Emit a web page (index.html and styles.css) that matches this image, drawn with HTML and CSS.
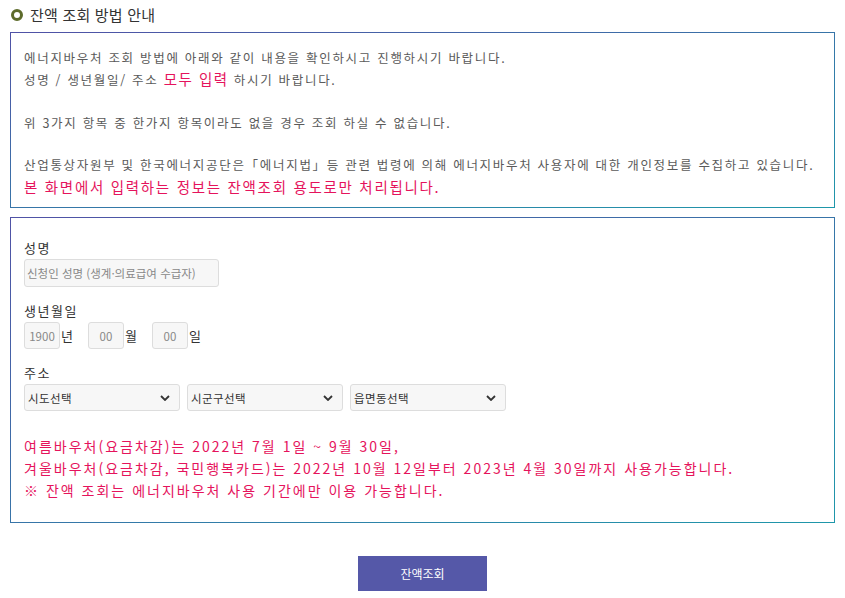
FILE: index.html
```html
<!DOCTYPE html>
<html lang="ko">
<head>
<meta charset="utf-8">
<link rel="stylesheet" href="styles.css">
</head>
<body>
<div class="page">
  <h2 class="title"><span class="dot"></span>잔액 조회 방법 안내</h2>
  <div class="box info">
    <p>에너지바우처 조회 방법에 아래와 같이 내용을 확인하시고 진행하시기 바랍니다.</p>
    <p>성명 / 생년월일/ 주소 <span class="red big">모두 입력</span> 하시기 바랍니다.</p>
    <p class="blank">&nbsp;</p>
    <p>위 3가지 항목 중 한가지 항목이라도 없을 경우 조회 하실 수 없습니다.</p>
    <p class="blank">&nbsp;</p>
    <p>산업통상자원부 및 한국에너지공단은「에너지법」등 관련 법령에 의해 에너지바우처 사용자에 대한 개인정보를 수집하고 있습니다.</p>
    <p class="red big">본 화면에서 입력하는 정보는 잔액조회 용도로만 처리됩니다.</p>
  </div>
  <div class="box form">
    <div class="field">
      <div class="label">성명</div>
      <input class="inp name" type="text" placeholder="신청인 성명 (생계·의료급여 수급자)">
    </div>
    <div class="field">
      <div class="label">생년월일</div>
      <div class="row">
        <input class="inp small" type="text" placeholder="1900"><span class="unit">년</span>
        <input class="inp small" type="text" placeholder="00"><span class="unit">월</span>
        <input class="inp small" type="text" placeholder="00"><span class="unit">일</span>
      </div>
    </div>
    <div class="field">
      <div class="label">주소</div>
      <div class="row selects">
        <div class="sel"><span>시도선택</span><svg viewBox="0 0 10 6" width="10" height="6"><path d="M1 1 L5 5 L9 1" fill="none" stroke="#333" stroke-width="1.8"/></svg></div>
        <div class="sel"><span>시군구선택</span><svg viewBox="0 0 10 6" width="10" height="6"><path d="M1 1 L5 5 L9 1" fill="none" stroke="#333" stroke-width="1.8"/></svg></div>
        <div class="sel"><span>읍면동선택</span><svg viewBox="0 0 10 6" width="10" height="6"><path d="M1 1 L5 5 L9 1" fill="none" stroke="#333" stroke-width="1.8"/></svg></div>
      </div>
    </div>
    <div class="notice">
      <p>여름바우처(요금차감)는 2022년 7월 1일 ~ 9월 30일,</p>
      <p>겨울바우처(요금차감, 국민행복카드)는 2022년 10월 12일부터 2023년 4월 30일까지 사용가능합니다.</p>
      <p>※ 잔액 조회는 에너지바우처 사용 기간에만 이용 가능합니다.</p>
    </div>
  </div>
  <div class="actions">
    <button class="btn" type="button">잔액조회</button>
  </div>
</div>
</body>
</html>
```

FILE: styles.css
```css
* { box-sizing: border-box; }
html, body { margin: 0; padding: 0; background: #fff; }
body {
  font-family: "Noto Sans CJK KR", "Noto Sans", sans-serif;
  color: #555;
}
.page { padding: 0 10px 0 10px; width: 845px; }
.title {
  margin: -5px 0 0 0;
  height: 37px;
  padding-top: 2px;
  display: flex;
  align-items: center;
  font-size: 15px;
  font-weight: normal;
  color: #333;
  line-height: 24px;
  letter-spacing: 0.2px;
}
.dot {
  width: 12px;
  height: 12px;
  border-radius: 50%;
  border: 3px solid #5d6b2b;
  margin: 0 7px 0 1px;
  flex: none;
}
.box {
  width: 825px;
  border: 1px solid;
  border-image: linear-gradient(to bottom right, #5052a6, #1f97aa) 1;
}
.info { padding: 14px 13px 10px; }
.info p {
  margin: 0;
  font-size: 12.5px;
  line-height: 21.3px;
  letter-spacing: 1.7px;
  color: #5a5a5a;
  white-space: nowrap;
}
.red { color: #e5135c !important; }
.big { font-size: 14.5px !important; letter-spacing: 1.5px; }
.form { margin-top: 9px; padding: 20px 13px 21px; }
.field { margin-bottom: 14px; }
.label { font-size: 13px; color: #333; line-height: 20px; margin-bottom: 1px; letter-spacing: 1.5px; }
.inp {
  display: block;
  height: 28px;
  border: 1px solid #ddd;
  border-radius: 3px;
  background: #f7f7f7;
  font-family: inherit;
  font-size: 11.5px;
  padding: 0 2px;
  color: #333;
  outline: none;
}
.inp::placeholder { color: #888; }
.name { width: 195px; }
.row { display: flex; align-items: center; }
.small { width: 36px; height: 27px; text-align: center; padding: 0; }
.unit { font-size: 13px; color: #333; width: 28px; padding-left: 1px; }
.selects { gap: 7px; margin-top: 1px; }
.sel {
  width: 156px;
  height: 27px;
  border: 1px solid #ddd;
  border-radius: 3px;
  background: #f7f7f7;
  display: flex;
  align-items: center;
  justify-content: space-between;
  padding: 0 9px 0 3px;
  font-size: 11.5px;
  color: #333;
  letter-spacing: 0.4px;
}
.notice { margin-top: 24px; }
.notice p {
  margin: 0;
  font-size: 14px;
  line-height: 22px;
  letter-spacing: 2px;
  color: #e5135c;
  white-space: nowrap;
}
.actions { display: flex; justify-content: center; padding-top: 33px; }
.btn {
  width: 129px;
  height: 35px;
  border: none;
  background: #5558a8;
  color: #fff;
  font-family: inherit;
  font-size: 12px;
}
```
